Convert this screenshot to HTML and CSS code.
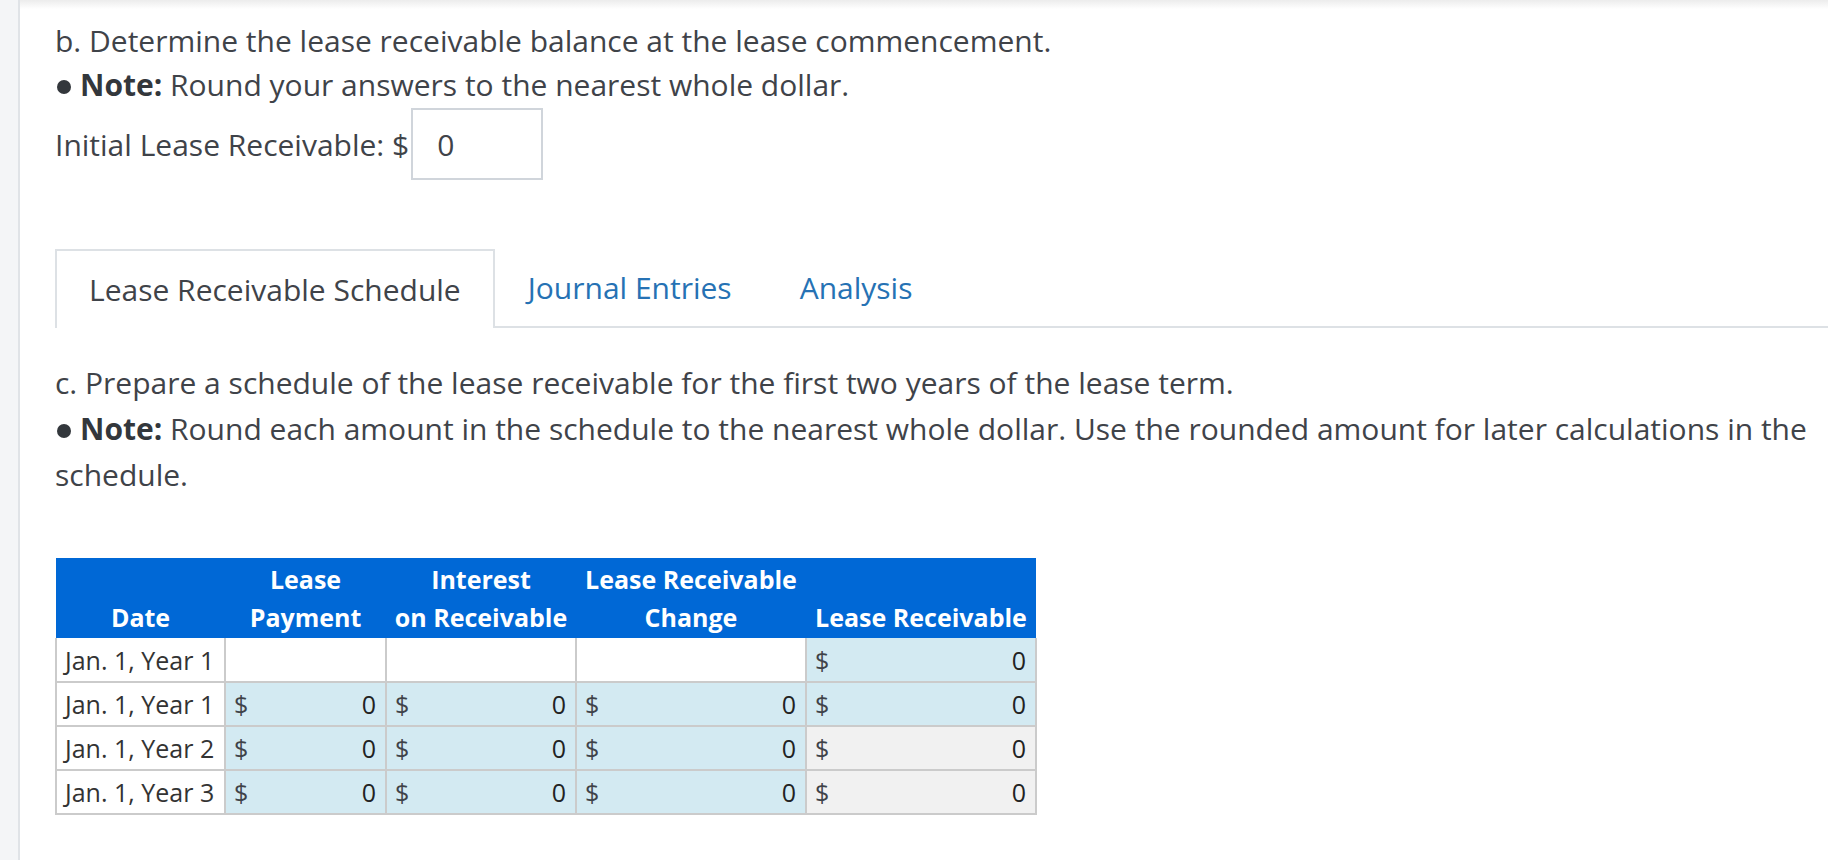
FILE: index.html
```html
<!DOCTYPE html>
<html>
<head>
<meta charset="utf-8">
<link rel="stylesheet" href="styles.css">
</head>
<body>
<div class="page">
  <div class="sidebar"></div>
  <main class="main">
    <p class="line">b. Determine the lease receivable balance at the lease commencement.</p>
    <p class="line"><span class="dot"></span><b>Note:</b> Round your answers to the nearest whole dollar.</p>
    <div class="initial">
      <span>Initial Lease Receivable: $</span>
      <div class="input">0</div>
    </div>

    <div class="tabs">
      <div class="tab active">Lease Receivable Schedule</div>
      <div class="tab link">Journal Entries</div>
      <div class="tab link">Analysis</div>
      <div class="tab-fill"></div>
    </div>

    <div class="part-c">
      <p class="line">c. Prepare a schedule of the lease receivable for the first two years of the lease term.</p>
      <p class="line"><span class="dot"></span><b>Note:</b> Round each amount in the schedule to the nearest whole dollar. Use the rounded amount for later calculations in the schedule.</p>
    </div>

    <table class="sched">
      <colgroup>
        <col class="c1"><col class="c2"><col class="c3"><col class="c4"><col class="c5">
      </colgroup>
      <thead>
        <tr>
          <th>Date</th>
          <th>Lease<br>Payment</th>
          <th>Interest<br>on Receivable</th>
          <th>Lease Receivable<br>Change</th>
          <th>Lease Receivable</th>
        </tr>
      </thead>
      <tbody>
        <tr class="first">
          <td class="date">Jan. 1, Year 1</td>
          <td class="blank"></td>
          <td class="blank"></td>
          <td class="blank"></td>
          <td class="val"><div class="amt"><span>$</span><span>0</span></div></td>
        </tr>
        <tr>
          <td class="date">Jan. 1, Year 1</td>
          <td class="val"><div class="amt"><span>$</span><span>0</span></div></td>
          <td class="val"><div class="amt"><span>$</span><span>0</span></div></td>
          <td class="val"><div class="amt"><span>$</span><span>0</span></div></td>
          <td class="val"><div class="amt"><span>$</span><span>0</span></div></td>
        </tr>
        <tr>
          <td class="date">Jan. 1, Year 2</td>
          <td class="val"><div class="amt"><span>$</span><span>0</span></div></td>
          <td class="val"><div class="amt"><span>$</span><span>0</span></div></td>
          <td class="val"><div class="amt"><span>$</span><span>0</span></div></td>
          <td class="calc"><div class="amt"><span>$</span><span>0</span></div></td>
        </tr>
        <tr>
          <td class="date">Jan. 1, Year 3</td>
          <td class="val"><div class="amt"><span>$</span><span>0</span></div></td>
          <td class="val"><div class="amt"><span>$</span><span>0</span></div></td>
          <td class="val"><div class="amt"><span>$</span><span>0</span></div></td>
          <td class="calc"><div class="amt"><span>$</span><span>0</span></div></td>
        </tr>
      </tbody>
    </table>
  </main>
</div>
</body>
</html>
```

FILE: styles.css
```css
html, body {
  margin: 0;
  padding: 0;
}
body {
  background: linear-gradient(#ececec 0, #ffffff 9px);
  font-family: "Open Sans", "DejaVu Sans", sans-serif;
  color: #3f4349;
  font-size: 30px;
  height: 860px;
  overflow: hidden;
}
.page {
  display: flex;
  min-height: 860px;
}
.sidebar {
  width: 18px;
  flex: none;
  background: #f4f5f7;
  border-right: 2px solid #e0e3e7;
}
.main {
  flex: 1;
  padding: 19px 0 0 35px;
}
.line {
  margin: 0;
  line-height: 44px;
}
.line b {
  font-weight: 700;
  color: #33373c;
}
.dot {
  display: inline-block;
  width: 14px;
  height: 14px;
  border-radius: 50%;
  background: #33373c;
  margin: 0 9px 2px 2px;
  vertical-align: middle;
}
.initial {
  display: flex;
  align-items: center;
  height: 72px;
  margin-top: 1px;
}
.input {
  box-sizing: border-box;
  width: 132px;
  height: 72px;
  border: 2px solid #d0d5db;
  margin-left: 2px;
  padding-left: 24px;
  display: flex;
  align-items: center;
}
.tabs {
  display: flex;
  margin-top: 69px;
  height: 79px;
}
.tab {
  box-sizing: border-box;
  display: flex;
  align-items: center;
  padding: 0 35px 0 33px;
  border-bottom: 2px solid #dde1e5;
}
.tab.active {
  padding: 0 32px 0 32px;
  border: 2px solid #dde1e5;
  border-bottom: none;
  background: #fff;
}
.tab.link {
  color: #2672b4;
}
.tab-fill {
  flex: 1;
  border-bottom: 2px solid #dde1e5;
}
.part-c {
  margin-top: 32px;
}
.part-c .line {
  line-height: 46px;
}
.sched {
  margin-top: 60px;
  border-collapse: collapse;
  table-layout: fixed;
  width: 980px;
  font-size: 25px;
}
.c1 { width: 169px; }
.c2 { width: 161px; }
.c3 { width: 190px; }
.c4 { width: 230px; }
.c5 { width: 230px; }
.sched th {
  background: #0068d6;
  color: #fff;
  font-weight: 700;
  font-size: 25px;
  line-height: 38px;
  padding: 2px 0 2px;
  vertical-align: bottom;
  text-align: center;
  white-space: nowrap;
}
.sched td {
  border: 2px solid #cbcbcb;
  height: 44px;
  padding: 0;
  color: #333;
  box-sizing: border-box;
}
.sched tr.first td {
  border-top: none;
}
.sched td.date {
  background: #fff;
  padding-left: 8px;
  white-space: nowrap;
}
.sched td.blank {
  background: #fff;
}
.sched td.val {
  background: #d3eaf2;
}
.sched td.calc {
  background: #f1f1f1;
}
.amt {
  display: flex;
  justify-content: space-between;
  padding: 0 9px 0 8px;
  color: #222;
}
.amt span:first-child {
  color: #3f4349;
}
```
